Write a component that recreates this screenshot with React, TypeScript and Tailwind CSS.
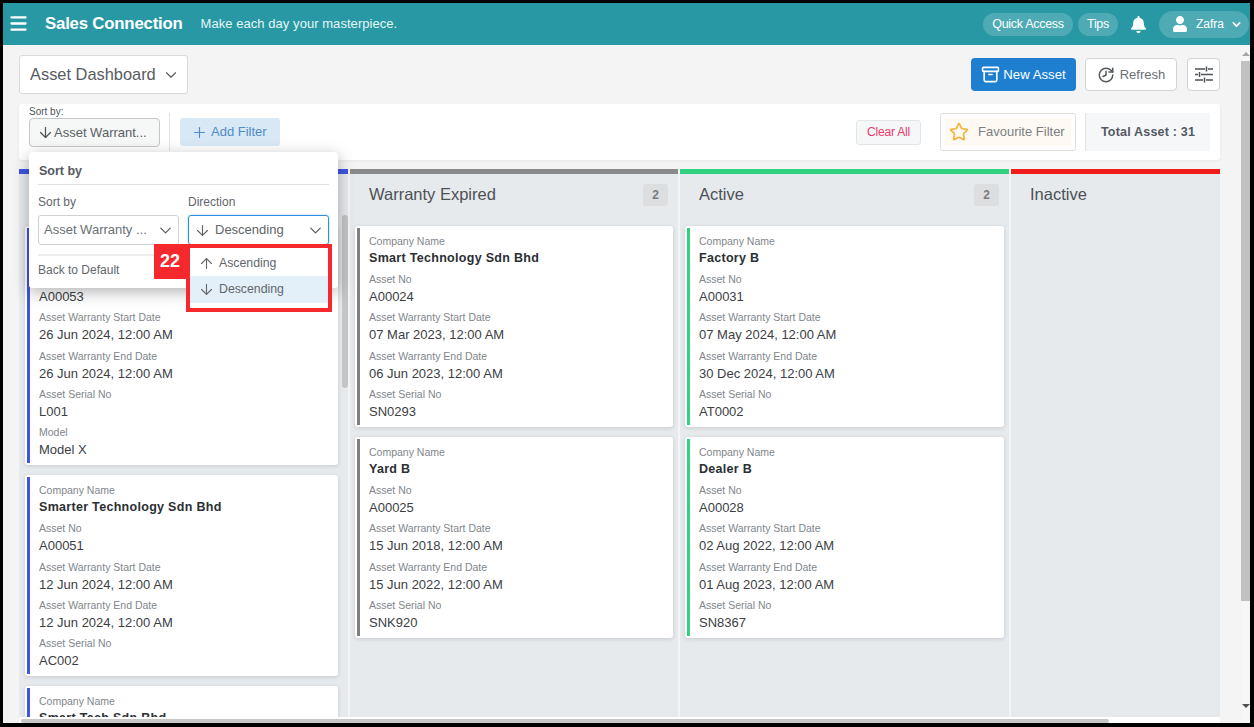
import React from "react";
import { ArrowDown, ArrowUp, Archive, ChevronDown, History, Menu, Plus, Star } from "lucide-react";
import { FaBell, FaUser } from "react-icons/fa";

type F = [string, string];
type CardT = { name: string; fields: F[] };

const c = (name: string, no: string, s: string, e: string, serial: string, model?: string): CardT => {
  const fields: F[] = [
    ["Asset No", no],
    ["Asset Warranty Start Date", s],
    ["Asset Warranty End Date", e],
    ["Asset Serial No", serial],
  ];
  if (model) fields.push(["Model", model]);
  return { name, fields };
};

const col1: CardT[] = [
  c("Smart Tech Sdn Bhd", "A00053", "26 Jun 2024, 12:00 AM", "26 Jun 2024, 12:00 AM", "L001", "Model X"),
  c("Smarter Technology Sdn Bhd", "A00051", "12 Jun 2024, 12:00 AM", "12 Jun 2024, 12:00 AM", "AC002"),
  c("Smart Tech Sdn Bhd", "A00050", "12 Jun 2024, 12:00 AM", "12 Jun 2024, 12:00 AM", "AC001"),
];
const col2: CardT[] = [
  c("Smart Technology Sdn Bhd", "A00024", "07 Mar 2023, 12:00 AM", "06 Jun 2023, 12:00 AM", "SN0293"),
  c("Yard B", "A00025", "15 Jun 2018, 12:00 AM", "15 Jun 2022, 12:00 AM", "SNK920"),
];
const col3: CardT[] = [
  c("Factory B", "A00031", "07 May 2024, 12:00 AM", "30 Dec 2024, 12:00 AM", "AT0002"),
  c("Dealer B", "A00028", "02 Aug 2022, 12:00 AM", "01 Aug 2023, 12:00 AM", "SN8367"),
];

function Card({ card, stripe }: { card: CardT; stripe: string }) {
  return (
    <div className="relative shrink-0 rounded-[3px] bg-white pl-[14px] pr-2 pt-[9px] pb-[6px] shadow-[0_1px_4px_rgba(0,0,0,0.14)]">
      <div className={`absolute left-[2px] top-[2px] bottom-[2px] w-[3px] ${stripe}`} />
      <div className="h-[12px] text-[10.5px] leading-[12px] text-[#81868c]">Company Name</div>
      <div className="mt-[3px] h-[17px] text-[12.5px] font-bold leading-[17px] tracking-[0.3px] text-[#2b2f33]">{card.name}</div>
      <div className="h-px" />
      {card.fields.map(([l, v]) => (
        <div key={l} className="mt-[5px] h-[33.25px]">
          <div className="h-[12px] text-[10.5px] leading-[12px] text-[#81868c]">{l}</div>
          <div className="mt-[3px] h-[17px] text-[13px] leading-[17px] text-[#3c4045]">{v}</div>
        </div>
      ))}
    </div>
  );
}

function Column({ title, count, bar, stripe, cards, width, scroll }: { title: string; count?: number; bar: string; stripe: string; cards: CardT[]; width: string; scroll?: boolean }) {
  return (
    <div className={`relative flex h-full flex-col overflow-hidden bg-[#e7eaed] ${width}`}>
      <div className={`h-[5px] shrink-0 ${bar}`} />
      <div className="flex h-[52px] shrink-0 items-start justify-between pl-[19px] pr-[10px] pt-[10px]">
        <span className="text-[16.5px] leading-[21px] text-[#4c5156]">{title}</span>
        {count !== undefined && (
          <span className="flex h-[22px] w-[25px] items-center justify-center rounded-[3px] bg-[#dcdee0] text-[12px] font-bold text-[#777c81]">{count}</span>
        )}
      </div>
      <div className={`flex flex-col gap-[10px] ${scroll ? "pl-[6px] pr-[10px]" : "px-[5px]"}`}>
        {cards.map((k, i) => (
          <Card key={i} card={k} stripe={stripe} />
        ))}
      </div>
      {scroll && <div className="absolute right-0 top-[46px] h-[173px] w-[6px] rounded-[3px] bg-[#c3c5c7]" />}
    </div>
  );
}

function Tune() {
  return (
    <svg width="18" height="17" viewBox="0 0 18 17" fill="none" stroke="#4d5258" strokeWidth="1.5">
      <path d="M0 3h10M13 3h5M11.500 0.500v5M0 8.500h3M6 8.500h12M4.500 6v5M0 14h8M11 14h7M9.500 11.500v5" />
    </svg>
  );
}

export default function App() {
  return (
    <div className="relative h-[727px] w-[1254px] overflow-hidden bg-white font-['Liberation_Sans',Arial,sans-serif]">
      <div className="flex h-[727px] w-[1254px] flex-col overflow-hidden border-[3px] border-r-[4px] border-b-[4px] border-black bg-[#f4f4f4]">
        {/* Top bar */}
        <header className="flex h-[42px] shrink-0 items-center bg-[#2899a4] pl-[5px] pr-[1px] text-white">
          <Menu size={21} strokeWidth={2.6} className="-mt-[1px]" />
          <span className="ml-[16px] text-[16.8px] font-bold tracking-[-0.2px]">Sales Connection</span>
          <span className="ml-[18px] text-[13px] tracking-[0.05px] text-[#e6f4f5]">Make each day your masterpiece.</span>
          <div className="ml-auto flex items-center">
            <span className="flex h-[23px] w-[90px] items-center justify-center rounded-full bg-[#4eabb5] text-[12.5px] tracking-[-0.3px]">Quick Access</span>
            <span className="ml-[5px] flex h-[23px] w-[40px] items-center justify-center rounded-full bg-[#4eabb5] text-[12.5px] tracking-[-0.3px]">Tips</span>
            <FaBell size={17} className="ml-[12px]" />
            <span className="ml-[12px] flex h-[27px] w-[90px] items-center rounded-full bg-[#4eabb5] pl-[13px] text-[12px]">
              <FaUser size={16} />
              <span className="ml-[8px]">Zafra</span>
              <ChevronDown size={13} strokeWidth={3} className="ml-[6px]" />
            </span>
          </div>
        </header>

        <div className="flex min-h-0 flex-1">
          {/* Main */}
          <main className="flex w-[1238px] shrink-0 flex-col overflow-hidden pl-[16px] pr-[21px]">
            {/* Title row */}
            <div className="mt-[10px] flex h-[39px] shrink-0 items-center justify-between">
              <div className="flex h-[39px] w-[169px] items-center whitespace-nowrap rounded-[3px] border border-[#d9dadb] bg-white pl-[10px] text-[16.4px] text-[#565b61]">
                Asset Dashboard
                <ChevronDown size={18} strokeWidth={1.5} className="ml-[6px]" />
              </div>
              <div className="flex items-center">
                <button className="flex h-[33px] w-[105px] items-center justify-center gap-[3px] rounded-[4px] bg-[#1e7fd0] text-[13.2px] text-white">
                  <Archive size={19} strokeWidth={2} />
                  New Asset
                </button>
                <button className="ml-[9px] flex h-[33px] w-[92px] items-center justify-center gap-[5px] rounded-[4px] border border-[#d2d3d4] bg-white text-[13px] text-[#6b7075]">
                  <History size={18} strokeWidth={2} className="-scale-x-100 text-[#54595e]" />
                  Refresh
                </button>
                <button className="ml-[10px] flex h-[33px] w-[33px] items-center justify-center rounded-[4px] border border-[#d2d3d4] bg-white">
                  <Tune />
                </button>
              </div>
            </div>

            {/* Filter bar */}
            <div className="mt-[10px] flex h-[56px] shrink-0 items-center rounded-[3px] bg-white pl-[10px] pr-[10px] shadow-[0_1px_3px_rgba(0,0,0,0.06)]">
              <div className="flex h-[56px] flex-col">
                <span className="mt-[2px] h-[12px] text-[10px] leading-[12px] text-[#4f5459]">Sort by:</span>
                <div className="flex h-[29px] w-[131px] items-center rounded-[4px] border border-[#c4c6c8] bg-[#f6f7f7] pl-[7px] text-[13px] text-[#5a5f64]">
                  <ArrowDown size={17} strokeWidth={1.7} className="text-[#4d5156]" />
                  <span className="whitespace-nowrap">Asset Warrant...</span>
                </div>
              </div>
              <div className="ml-[9px] h-[38px] w-px bg-[#e3e4e5]" />
              <div className="ml-[10px] flex h-[28px] w-[100px] items-center gap-[3px] rounded-[3px] bg-[#d8e8f4] pl-[11px] text-[13px] text-[#4d8bc9]">
                <Plus size={17} strokeWidth={1.6} />
                Add Filter
              </div>
              <div className="ml-auto flex h-[38px] items-center">
                <div className="flex h-[25px] w-[65px] items-center justify-center rounded-[3px] border border-[#e3e5e7] bg-[#f6f7f9] text-[12px] tracking-[-0.2px] text-[#e8396a]">Clear All</div>
                <div className="ml-[19px] flex h-[38px] w-[136px] items-center rounded-[2px] border border-[#dfe0e1] bg-white p-[4px]">
                  <div className="flex h-full w-full items-center bg-[#fefaf3] pl-[4px] text-[13px] text-[#7b7f83]">
                    <Star size={20} strokeWidth={2} className="text-[#f6b23c]" />
                    <span className="ml-[9px]">Favourite Filter</span>
                  </div>
                </div>
                <div className="ml-[9px] flex h-[38px] w-[125px] items-center justify-center border-l border-[#dfe2e5] bg-[#f6f7f9] text-[12.5px] font-bold tracking-[0.2px] text-[#54595e]">Total Asset : 31</div>
              </div>
            </div>

            {/* Board */}
            <div className="mt-[9px] flex min-h-0 flex-1 gap-[2px]">
              <Column title="" bar="bg-[#3f55e3]" stripe="bg-[#3f55e3]" cards={col1} width="w-[329px]" scroll />
              <Column title="Warranty Expired" count={2} bar="bg-[#8a8a8a]" stripe="bg-[#808080]" cards={col2} width="w-[328px]" />
              <Column title="Active" count={2} bar="bg-[#2fd27f]" stripe="bg-[#2fd27f]" cards={col3} width="w-[329px]" />
              <Column title="Inactive" bar="bg-[#f01c1c]" stripe="bg-[#f01c1c]" cards={[]} width="w-[209px]" />
            </div>

            {/* Horizontal scrollbar */}
            <div className="h-[6px] shrink-0 bg-white pt-[2px]">
              <div className="ml-[2px] h-full w-[1088px] rounded-[2px] bg-[#c6c6c6]" />
            </div>
          </main>

          {/* Page scrollbar */}
          <div className="flex w-[9px] shrink-0 flex-col items-center bg-[#f6f6f6]">
            <span className="mt-[7px] h-0 w-0 border-x-[4px] border-b-[4px] border-x-transparent border-b-[#a5a5a5]" />
            <div className="mt-[5px] h-[540px] w-full bg-[#c1c1c1]" />
            <span className="mt-auto mb-[15px] h-0 w-0 border-x-[4px] border-t-[4px] border-x-transparent border-t-[#505050]" />
          </div>
        </div>
      </div>

      {/* Sort popover */}
      <div className="absolute left-[29px] top-[152px] h-[136px] w-[309px] rounded-[3px] bg-white pl-[9px] pr-[9px] shadow-[0_4px_16px_rgba(0,0,0,0.3)]">
        <div className="flex h-[33px] items-center border-b border-[#e0e1e2] pl-px pt-[6px] text-[12.5px] font-bold text-[#55595e]">Sort by</div>
        <div className="mt-[10px] flex gap-[9px]">
          <div className="w-[141px]">
            <div className="h-[14px] text-[12px] leading-[14px] text-[#62676c]">Sort by</div>
            <div className="mt-[6px] flex h-[30px] items-center justify-between whitespace-nowrap rounded-[3px] border border-[#cfd2d5] pl-[5px] pr-[3px] text-[13px] text-[#6b7075]">
              Asset Warranty ...
              <ChevronDown size={19} strokeWidth={1.5} className="text-[#55595e]" />
            </div>
          </div>
          <div className="w-[141px]">
            <div className="h-[14px] text-[12px] leading-[14px] text-[#62676c]">Direction</div>
            <div className="mt-[6px] flex h-[30px] items-center rounded-[3px] border border-[#2b8fe3] pl-[5px] pr-[3px] text-[13px] text-[#5f6469] shadow-[0_0_2px_rgba(43,143,227,0.5)]">
              <ArrowDown size={17} strokeWidth={1.6} />
              <span className="ml-[4px]">Descending</span>
              <ChevronDown size={19} strokeWidth={1.5} className="ml-auto text-[#55595e]" />
            </div>
          </div>
        </div>
        <div className="mt-[9px] flex h-[29px] items-center border-t-2 border-[#eeeeef] text-[12px] text-[#62676c]">Back to Default</div>
      </div>

      {/* Direction menu with annotation */}
      <div className="absolute left-[186px] top-[244px] h-[68px] w-[146px] border-[4px] border-[#f5282d] bg-white pt-[2px]">
        <div className="flex h-[26px] items-center pl-[8px] text-[12.3px] text-[#62676c]">
          <ArrowUp size={17} strokeWidth={1.6} />
          <span className="ml-[4px]">Ascending</span>
        </div>
        <div className="flex h-[27px] items-center bg-[#e3f0f9] pl-[8px] text-[12.3px] text-[#62676c]">
          <ArrowDown size={17} strokeWidth={1.6} />
          <span className="ml-[4px]">Descending</span>
        </div>
      </div>
      <div className="absolute left-[154px] top-[244px] flex h-[35px] w-[32px] items-center justify-center bg-[#f5282d] text-[18px] font-bold text-white">22</div>
    </div>
  );
}
